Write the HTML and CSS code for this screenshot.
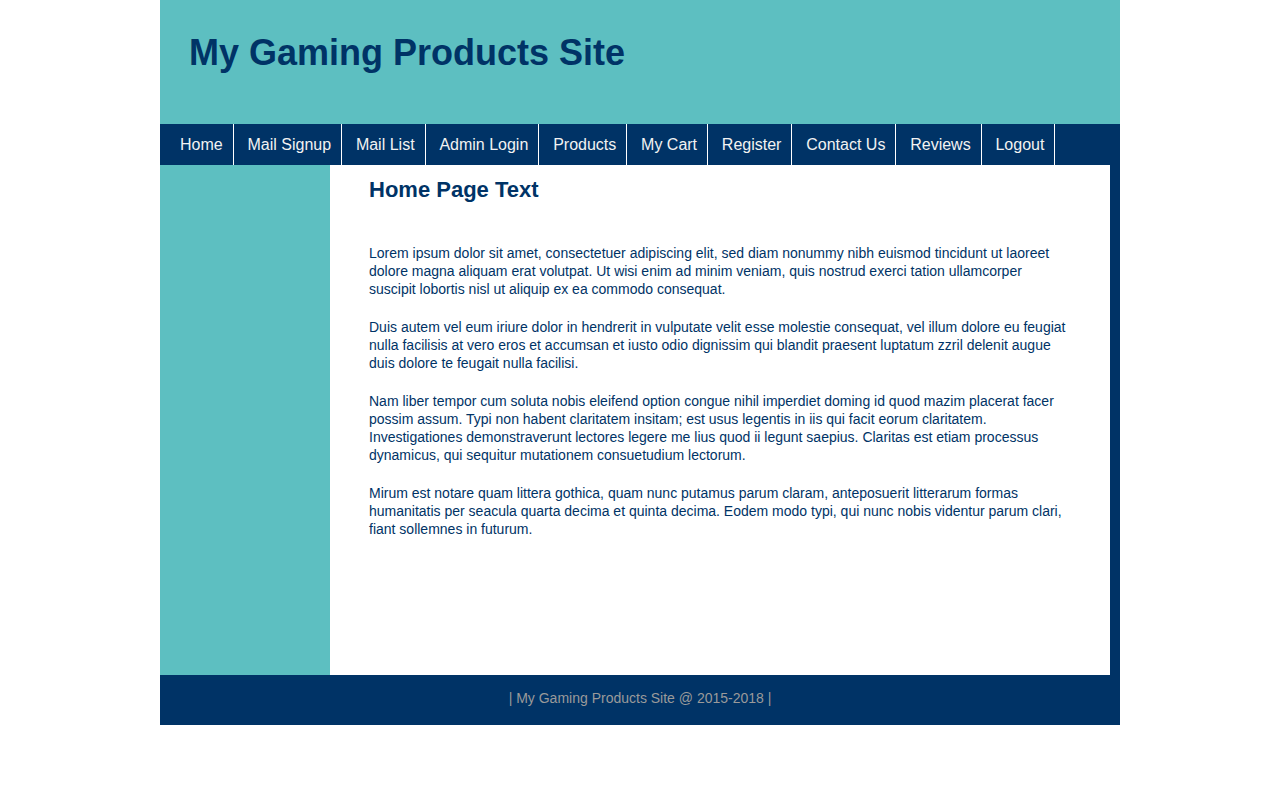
FILE: index.html
```html
<!DOCTYPE html>
<html lang="en">
<head>
<meta charset="utf-8">
<title>My Gaming Products Site</title>
<link rel="stylesheet" href="styles.css">
</head>
<body>
<div class="page">
  <header class="header">
    <h1 class="site-title">My Gaming Products Site</h1>
  </header>
  <nav class="nav">
    <a class="nav-item" href="#">Home</a>
    <a class="nav-item" href="#">Mail Signup</a>
    <a class="nav-item" href="#">Mail List</a>
    <a class="nav-item" href="#">Admin Login</a>
    <a class="nav-item" href="#">Products</a>
    <a class="nav-item" href="#">My Cart</a>
    <a class="nav-item" href="#">Register</a>
    <a class="nav-item" href="#">Contact Us</a>
    <a class="nav-item" href="#">Reviews</a>
    <a class="nav-item" href="#">Logout</a>
  </nav>
  <div class="main">
    <aside class="sidebar"></aside>
    <section class="content">
      <h2 class="content-title">Home Page Text</h2>
      <p class="para">Lorem ipsum dolor sit amet, consectetuer adipiscing elit, sed diam nonummy nibh euismod tincidunt ut laoreet dolore magna aliquam erat volutpat. Ut wisi enim ad minim veniam, quis nostrud exerci tation ullamcorper suscipit lobortis nisl ut aliquip ex ea commodo consequat.</p>
      <p class="para">Duis autem vel eum iriure dolor in hendrerit in vulputate velit esse molestie consequat, vel illum dolore eu feugiat nulla facilisis at vero eros et accumsan et iusto odio dignissim qui blandit praesent luptatum zzril delenit augue duis dolore te feugait nulla facilisi.</p>
      <p class="para">Nam liber tempor cum soluta nobis eleifend option congue nihil imperdiet doming id quod mazim placerat facer possim assum. Typi non habent claritatem insitam; est usus legentis in iis qui facit eorum claritatem. Investigationes demonstraverunt lectores legere me lius quod ii legunt saepius. Claritas est etiam processus dynamicus, qui sequitur mutationem consuetudium lectorum.</p>
      <p class="para">Mirum est notare quam littera gothica, quam nunc putamus parum claram, anteposuerit litterarum formas humanitatis per seacula quarta decima et quinta decima. Eodem modo typi, qui nunc nobis videntur parum clari, fiant sollemnes in futurum.</p>
    </section>
  </div>
  <footer class="footer">| My Gaming Products Site @ 2015-2018 |</footer>
</div>
</body>
</html>
```

FILE: styles.css
```css
html, body {
  margin: 0;
  padding: 0;
  background: #ffffff;
  font-family: "Liberation Sans", Arial, Helvetica, sans-serif;
}

.page {
  width: 960px;
  margin: 0 auto;
}

.header {
  background: #5dbfc1;
  height: 124px;
  box-sizing: border-box;
  padding: 32px 0 0 29px;
}

.site-title {
  margin: 0;
  font-size: 36px;
  line-height: 41px;
  font-weight: bold;
  color: #003366;
}

.nav {
  display: flex;
  gap: 3.8px;
  height: 41px;
  background: #003366;
  padding-left: 10px;
}

.nav-item {
  display: flex;
  align-items: center;
  padding: 0 10px;
  border-right: 1px solid #ffffff;
  color: #f2f2f2;
  text-decoration: none;
  font-size: 16px;
}

.main {
  display: flex;
  min-height: 510px;
}

.sidebar {
  width: 170px;
  flex: none;
  background: #5dbfc1;
}

.content {
  flex: 1;
  background: #ffffff;
  border-right: 10px solid #003366;
  padding: 12px 39px 0 39px;
  color: #003366;
}

.content-title {
  margin: 0 0 42px 0;
  font-size: 22px;
  line-height: 25px;
  font-weight: bold;
}

.para {
  margin: 0 0 20px 0;
  font-size: 14px;
  line-height: 18px;
}

.footer {
  background: #003366;
  height: 50px;
  line-height: 46px;
  text-align: center;
  color: #9a9a9a;
  font-size: 14px;
}
```
